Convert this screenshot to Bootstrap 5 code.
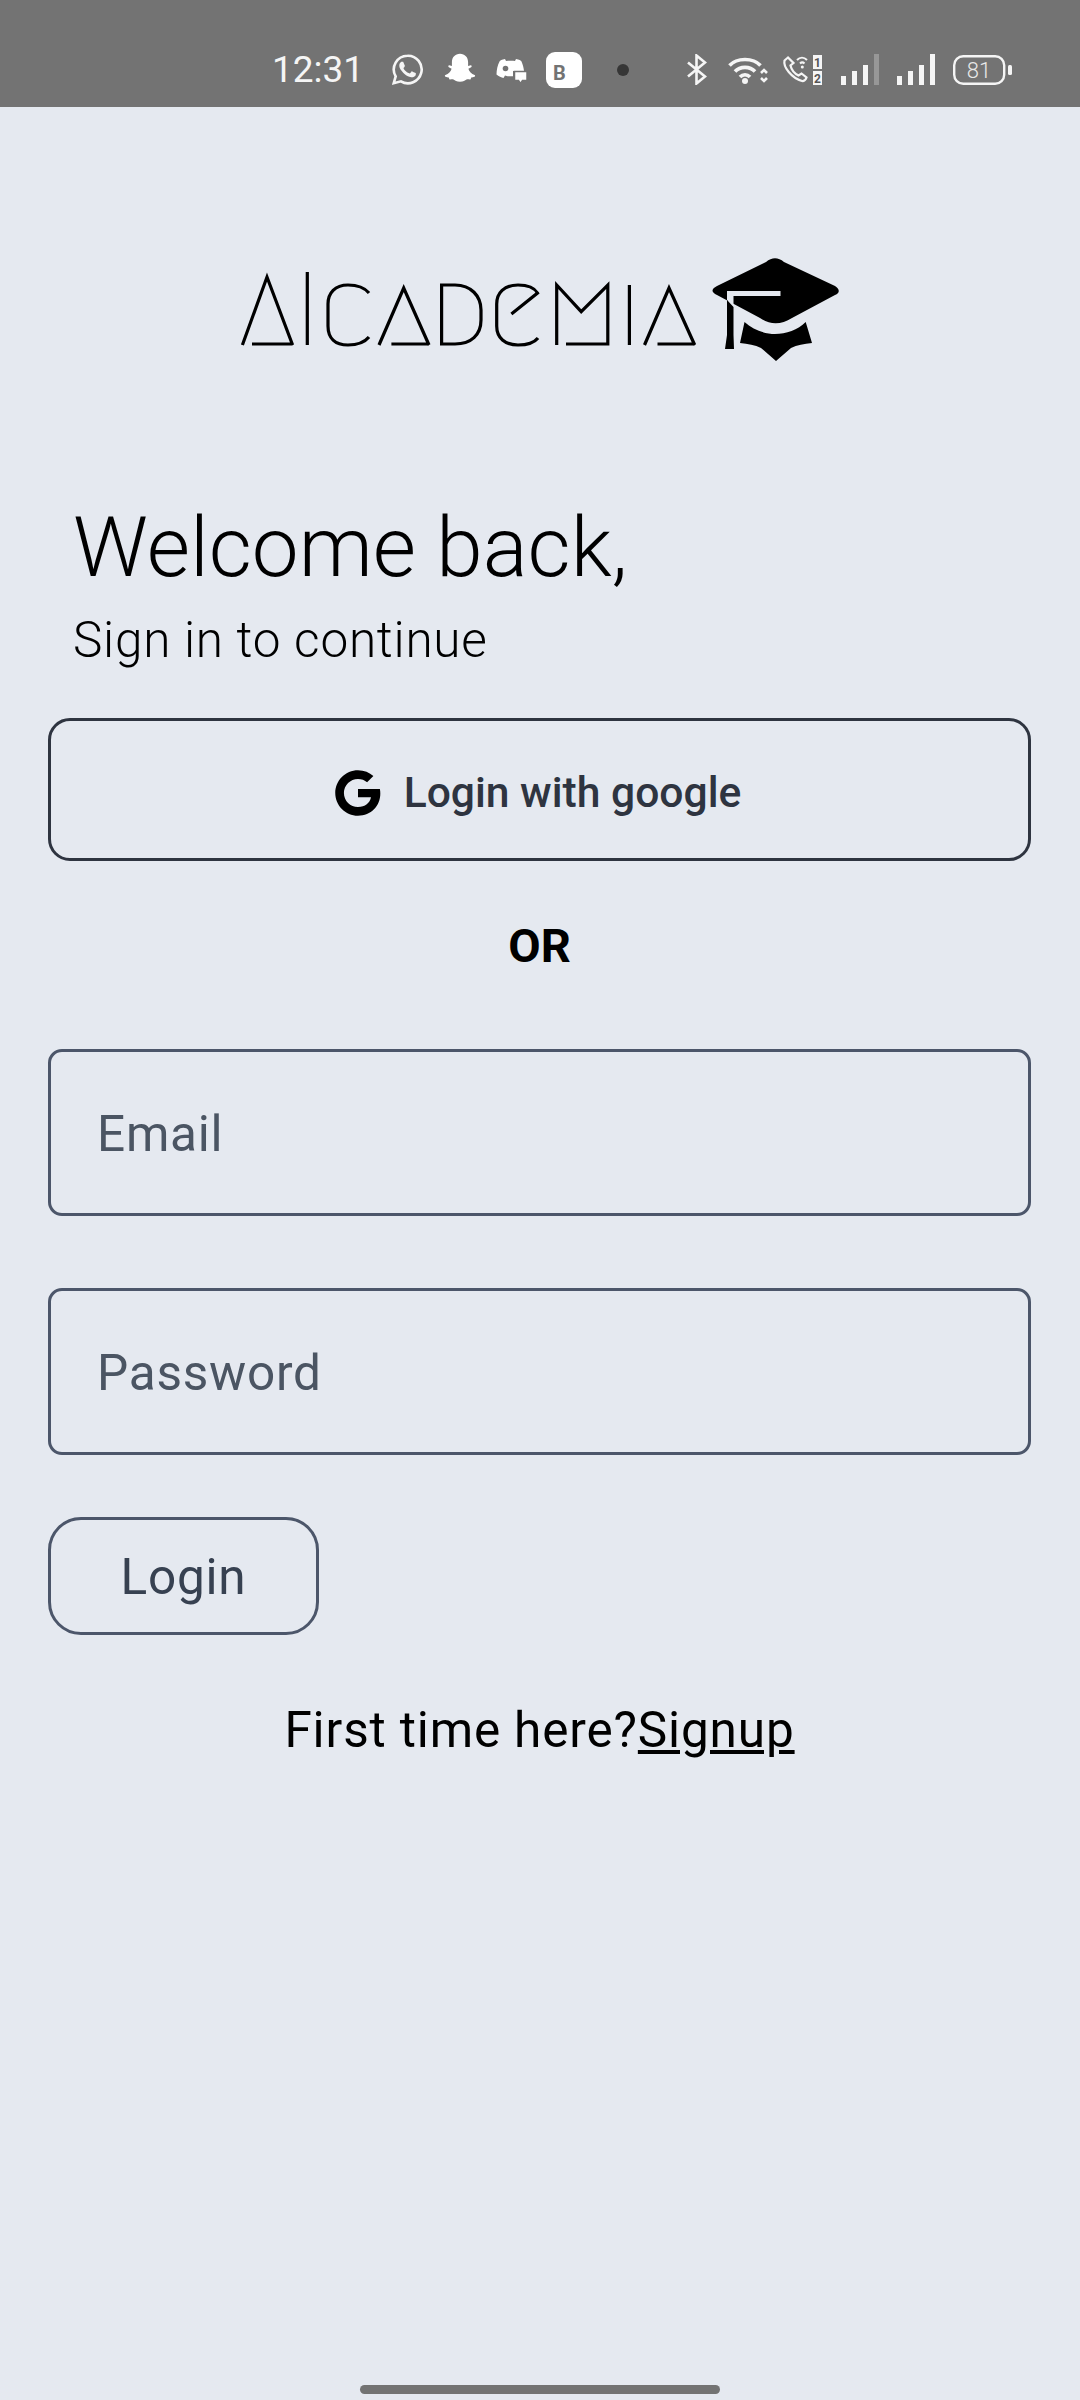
<!DOCTYPE html>
<html lang="en">
<head>
    <meta charset="UTF-8">
    <meta name="viewport" content="width=device-width, initial-scale=1.0">
    <link href="https://cdn.jsdelivr.net/npm/bootstrap@5.3.0/dist/css/bootstrap.min.css" rel="stylesheet">
    <script defer src="https://cdn.jsdelivr.net/npm/bootstrap@5.3.0/dist/js/bootstrap.bundle.min.js"></script>
    <title>Academia Login</title>
    <style>
        body {
            background-color: #e5e9f0;
            font-family: Roboto, "Liberation Sans", sans-serif;
            width: 1080px;
            height: 2400px;
            overflow: hidden;
        }

        /* status bar */
        .status-strip {
            height: 107px;
            padding: 32px 0 0 272px;
            background-color: #737373;
            color: #f5f5f5;
        }
        .status-time { font-size: 37px; font-weight: 400; line-height: 1; width: 87px; margin-right: 32px; }
        .status-strip svg { flex: none; display: block; }
        .gap-noti { margin-right: 19px; }
        .gap-b { margin-right: 18px; }
        .gap-dot { margin-right: 35px; }
        .gap-dot2 { margin-right: 57px; }
        .gap-r { margin-right: 21px; }
        .gap-r2 { margin-right: 14px; }
        .gap-r3 { margin-right: 18px; }

        /* logo */
        .logo-wrap { margin-top: 133px; }

        /* heading */
        .login-page { padding: 0 49px 0 48px; }
        .welcome-title {
            font-size: 83.6px;
            font-weight: 300;
            line-height: 96px;
            margin: 129px 0 0 25px;
            color: #000;
        }
        .welcome-sub {
            font-size: 49.5px;
            font-weight: 300;
            line-height: 66px;
            letter-spacing: .75px;
            margin: 12px 0 0 25px;
            color: #000;
        }

        .btn-google {
            height: 143px;
            margin-top: 45px;
            padding: 6px 6px 0 0;
            border: 3px solid #2e3440;
            border-radius: 22px;
            color: #2e3440;
            font-size: 42.6px;
            font-weight: 500;
            gap: 20px;
        }
        .or-text { font-size: 47px; font-weight: 700; line-height: 52px; margin: 59px 0 0; color: #000; }

        .field-input {
            height: 167px;
            padding: 3px 46px 0;
            background-color: transparent;
            border: 3px solid #4c566a;
            border-radius: 14px;
            font-size: 49.5px;
            letter-spacing: .75px;
            color: #2e3440;
        }
        .field-input::placeholder { color: #4b5563; opacity: 1; }
        .field-first { margin-top: 77px; }
        .field-next { margin-top: 72px; }

        .btn-login {
            display: block;
            width: 271px;
            height: 118px;
            margin-top: 62px;
            padding: 3px 0 0;
            border: 3px solid #4c566a;
            border-radius: 33px;
            color: #374151;
            font-size: 49.5px;
            letter-spacing: .75px;
        }
        .signup-line {
            font-size: 49.5px;
            line-height: 60px;
            letter-spacing: .85px;
            margin: 65px 0 0;
            color: #000;
        }
        .signup-line a { color: #000; }

        .home-bar {
            position: absolute;
            left: 360px;
            top: 2385px;
            width: 360px;
            height: 9px;
            border-radius: 5px;
            background-color: #737373;
        }
    </style>
</head>
<body>
    <!-- status bar -->
    <div class="status-strip d-flex align-items-center">
        <span class="status-time">12:31</span>
        <svg class="gap-noti" width="33" height="33" viewBox="0 0 24 24">
            <path d="M12 2a10 10 0 0 0-8.6 15l-1.4 5 5.2-1.4A10 10 0 1 0 12 2z" fill="none" stroke="#f5f5f5" stroke-width="1.9"/>
            <path fill="#f5f5f5" d="M17.5 14.4c-.3-.15-1.76-.87-2.03-.97-.27-.1-.47-.15-.67.15-.2.3-.77.97-.94 1.16-.17.2-.35.22-.65.07-.3-.15-1.26-.46-2.4-1.48-.89-.79-1.48-1.76-1.66-2.06-.17-.3-.02-.46.13-.61.13-.13.3-.35.45-.52.15-.17.2-.3.3-.5.1-.2.05-.37-.02-.52-.08-.15-.67-1.62-.92-2.22-.24-.58-.49-.5-.67-.51h-.57c-.2 0-.52.07-.79.37-.27.3-1.04 1.02-1.04 2.49 0 1.47 1.07 2.89 1.22 3.09.15.2 2.1 3.2 5.08 4.49.71.31 1.26.49 1.69.63.71.23 1.36.19 1.87.12.57-.09 1.76-.72 2.01-1.41.25-.7.25-1.29.17-1.41-.07-.13-.27-.2-.57-.35z"/>
        </svg>
        <svg class="gap-noti" width="34" height="34" viewBox="1.5 1.5 21 21">
            <path fill="#fff" d="M12 2c3 0 5 2.2 5 5.2v2.3l1.6-.4c.7 0 .9.8.3 1.2l-1.7 1c.4 1.8 1.9 3.2 3.8 3.8.5.2.4.8 0 1-.7.3-1.6.4-2.1.6-.2.5-.1 1-.5 1.1-.7.1-1.5-.2-2.4.1-1 .4-1.8 1.4-4 1.4s-3-1-4-1.4c-.9-.3-1.7 0-2.4-.1-.4-.1-.3-.6-.5-1.1-.5-.2-1.4-.3-2.1-.6-.4-.2-.5-.8 0-1 1.9-.6 3.4-2 3.8-3.8l-1.7-1c-.6-.4-.4-1.2.3-1.2l1.6.4V7.2C7 4.2 9 2 12 2z"/>
        </svg>
        <svg class="gap-b" width="32" height="28" viewBox="0 0 32 28">
            <path fill="#fff" d="M9 3c-3 .5-5 1.500-5.500 2.500C1.500 9.500 .5 14 .5 18.500 2.500 20.500 5.500 21.500 7.500 22l1.500-2.500c3 1 6 1 8 .7V15h11c-.3-3.500-1.300-6.800-2.500-9.500C25 4.500 23 3.500 20 3l-1 2c-2.500-.4-5-.4-9 0z"/>
            <circle cx="9.500" cy="12.500" r="2.800" fill="#737373"/>
            <path fill="#fff" stroke="#737373" stroke-width="1.500" d="M18.500 15.500h12.500v9h-4.500l-2 3-2-3h-4z"/>
        </svg>
        <svg class="gap-dot" width="36" height="36" viewBox="0 0 36 36">
            <rect width="36" height="36" rx="9" fill="#fff"/>
            <text x="7" y="28" font-family="Roboto, sans-serif" font-size="20" font-weight="700" fill="#737373">B</text>
        </svg>
        <svg class="gap-dot2" width="12" height="12" viewBox="0 0 12 12"><circle cx="6" cy="6" r="6" fill="#363636"/></svg>
        <svg class="gap-r" width="21" height="31" viewBox="0 0 21 31">
            <path d="M2 8.500l17 14-8.500 7V1.500l8.500 7-17 14" fill="none" stroke="#f5f5f5" stroke-width="2.600"/>
        </svg>
        <svg class="gap-r2" width="40" height="29" viewBox="0 0 40 29">
            <path d="M1.500 10.500C9 2.500 25 2.500 32.500 10.500M7 16.500c5-5.500 15-5.500 20 0M12 22c2.800-3 7.200-3 10 0" fill="none" stroke="#f5f5f5" stroke-width="3.600"/>
            <circle cx="17" cy="26" r="3" fill="#f5f5f5"/>
            <path d="M33 18l3-3 3 3M33 23l3 3 3-3" fill="none" stroke="#f5f5f5" stroke-width="2.600"/>
        </svg>
        <svg class="gap-r3" width="41" height="31" viewBox="0 0 41 31">
            <path d="M6 3.500L2.500 6.500C1 13 9.500 24 20 27c2 .3 4-1.500 4.500-3.500l-5-4-3 2C12.500 19.500 9.500 16 8.500 11.500l3-2.500z" fill="none" stroke="#f5f5f5" stroke-width="2.200"/>
            <path d="M15 6c3-3 7-3 10 0M18 9.500c1.500-1.500 3-1.500 4.500 0" fill="none" stroke="#f5f5f5" stroke-width="2"/>
            <circle cx="20.300" cy="13" r="1.500" fill="#f5f5f5"/>
            <rect x="31" y="1" width="9" height="14" fill="#f5f5f5"/>
            <rect x="31" y="17" width="9" height="14" fill="#f5f5f5"/>
            <text x="35.500" y="12.500" text-anchor="middle" font-family="Roboto, sans-serif" font-size="12" font-weight="700" fill="#555">1</text>
            <text x="35.500" y="28.500" text-anchor="middle" font-family="Roboto, sans-serif" font-size="12" font-weight="700" fill="#555">2</text>
        </svg>
        <svg class="gap-r3" width="38" height="31" viewBox="0 0 38 31">
            <rect x="0" y="22" width="5" height="9" fill="#f5f5f5"/>
            <rect x="11" y="17" width="5" height="14" fill="#f5f5f5"/>
            <rect x="22" y="11" width="5" height="20" fill="#f5f5f5"/>
            <rect x="33" y="0" width="5" height="31" fill="#979797"/>
        </svg>
        <svg class="gap-r3" width="38" height="31" viewBox="0 0 38 31">
            <rect x="0" y="22" width="5" height="9" fill="#f5f5f5"/>
            <rect x="11" y="17" width="5" height="14" fill="#f5f5f5"/>
            <rect x="22" y="11" width="5" height="20" fill="#f5f5f5"/>
            <rect x="33" y="0" width="5" height="31" fill="#f5f5f5"/>
        </svg>
        <svg width="60" height="30" viewBox="0 0 60 30">
            <rect x="1.200" y="1.200" width="50" height="27.600" rx="9" fill="none" stroke="#f5f5f5" stroke-width="2.400"/>
            <rect x="55" y="10" width="4" height="10" rx="1.500" fill="#f5f5f5"/>
            <text x="26" y="22.500" text-anchor="middle" font-family="Roboto, sans-serif" font-size="22" font-weight="300" fill="#e8e8e8">81</text>
        </svg>
    </div>

    <!-- logo -->
    <div class="logo-wrap d-flex justify-content-center">
        <svg width="640" height="130" viewBox="0 0 640 130" role="img" aria-label="Academia">
            <g fill="none" stroke="#000" stroke-width="3.200">
                <path d="M22.400 105L47 37 72.600 105M32 104H72.600"/>
                <path d="M87.300 32V105"/>
                <path d="M149 53C144 47 136 45 128 45 115 45 108 53 108 64V86C108 98 115 105 128 105 136 105 144 103 149 97"/>
                <path d="M159 105L183.700 48 209 105M171.400 104H209"/>
                <path d="M221.600 45H235C251 45 261 56 261 70V80C261 95 251 104 235 104H221.600Z"/>
                <path d="M291.400 74L317.500 53C314 47 308 45 298 45 284 45 276.700 53 276.700 64V86C276.700 98 285 105 298 105 307 105 314 103 318 98"/>
                <path d="M336.700 105V45L361.200 71.700 387.800 45V104H346"/>
                <path d="M409.400 45V105"/>
                <path d="M424.500 105L449 48 474.700 105M437.500 104H474.700"/>
            </g>
            <path d="M546 22C552 17 558 17 564 22L615 46C620 49 620 53 615 55L572 78C561 85 550 85 540 78L497 55C491 52 491 49 497 46Z" fill="#000"/>
            <path d="M507 51H560.500V56H513.500V67L507 60Z" fill="#e5e9f0"/>
            <path d="M507 60L513.500 67V95L514 109H505L507 95Z" fill="#000"/>
            <path d="M524.500 82C533 90 545 94 555 94 566 94 578 90 585.700 82L592 103C584 104 577 105 571 108L556 121 541 108C535 105 528 104 520 103Z" fill="#000"/>
        </svg>
    </div>

    <div class="login-page">
        <h1 class="welcome-title">Welcome back,</h1>
        <p class="welcome-sub">Sign in to continue</p>

        <button type="button" class="btn btn-google w-100 d-flex align-items-center justify-content-center">
            <svg width="52" height="52" viewBox="0 0 48 48">
                <path fill="#000" d="M24 3c5.800 0 10.500 2 14.200 5.400l-5.800 5.700C30.200 12 27.300 11 24 11c-7.100 0-13 5.800-13 13s5.900 13 13 13c6.600 0 11-3.800 12-9H24v-7.700h20.200c.3 1.400.4 2.700.4 4.200C44.600 36 36 45 24 45 12.400 45 3 35.600 3 24S12.400 3 24 3z"/>
            </svg>
            <span>Login with google</span>
        </button>

        <p class="or-text text-center">OR</p>

        <form>
            <input type="email" class="form-control field-input field-first" placeholder="Email">
            <input type="password" class="form-control field-input field-next" placeholder="Password">
            <button type="button" class="btn btn-login">Login</button>
        </form>

        <p class="signup-line text-center">First time here?<a href="#">Signup</a></p>
    </div>

    <div class="home-bar"></div>
</body>
</html>
